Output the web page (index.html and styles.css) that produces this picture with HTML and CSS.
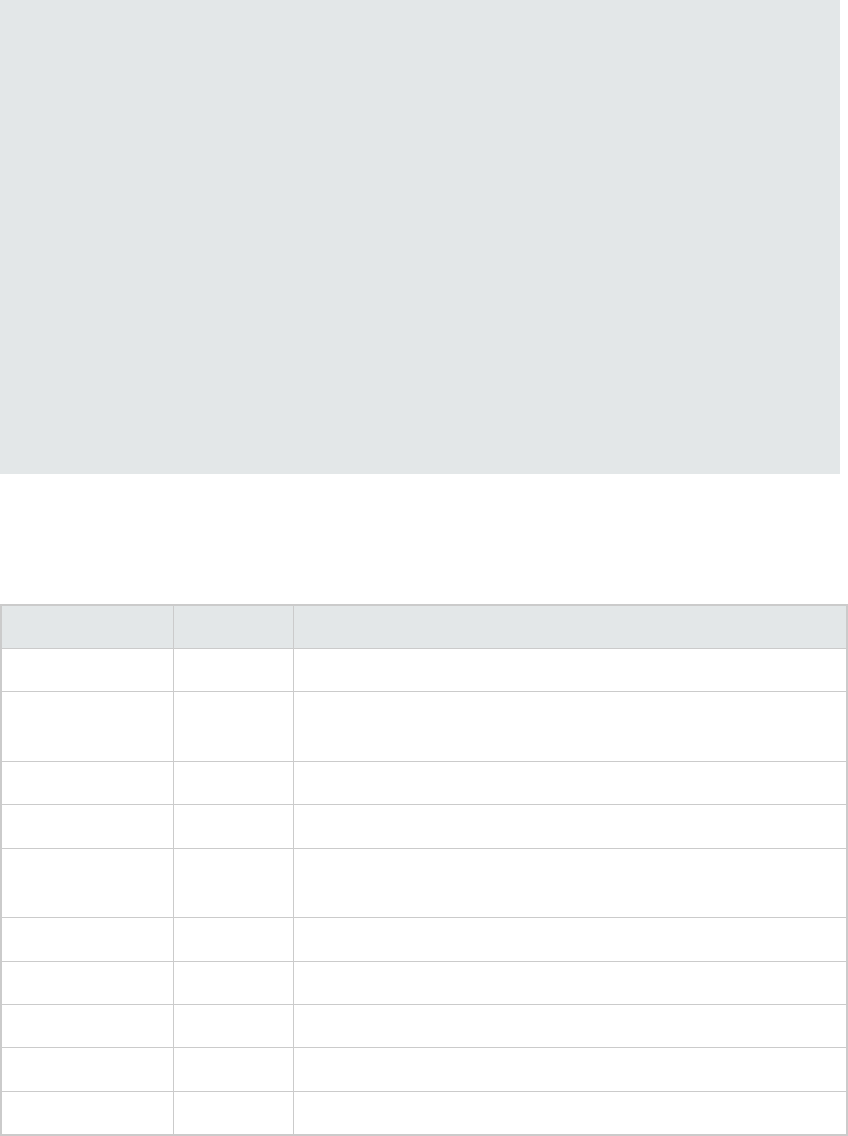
FILE: index.html
```html
<!DOCTYPE html>
<html lang="en">
  <head>
    <meta charset="UTF-8" />
    <meta name="viewport" content="width=device-width, initial-scale=1.0" />
    <title>Table</title>
    <link rel="stylesheet" href="styles.css">
  </head>
  <body>
    <div class="figure"></div>

    <table class="data-table">
      <thead>
        <tr>
          <th class="col-name"></th>
          <th class="col-type"></th>
          <th class="col-desc"></th>
        </tr>
      </thead>
      <tbody>
        <tr><td></td><td></td><td></td></tr>
        <tr class="tall"><td></td><td></td><td></td></tr>
        <tr><td></td><td></td><td></td></tr>
        <tr><td></td><td></td><td></td></tr>
        <tr class="tall"><td></td><td></td><td></td></tr>
        <tr><td></td><td></td><td></td></tr>
        <tr><td></td><td></td><td></td></tr>
        <tr><td></td><td></td><td></td></tr>
        <tr><td></td><td></td><td></td></tr>
        <tr><td></td><td></td><td></td></tr>
      </tbody>
    </table>
  </body>
</html>
```

FILE: styles.css
```css
:root {
  --panel-color: #e3e7e8;
  --line-color: #cbcbcb;
}

* {
  padding: 0;
  margin: 0;
  box-sizing: border-box;
}

body {
  font-family: "Liberation Sans", Arial, sans-serif;
  font-size: 14px;
  color: #333333;
  background: #ffffff;
}

/* image placeholder */
.figure {
  width: 840px;
  height: 474px;
  background: var(--panel-color);
  margin-bottom: 130px;
}

.data-table {
  width: 100%;
  table-layout: fixed;
  border-collapse: separate;
  border-spacing: 0;
  border: 2px solid var(--line-color);
}

.data-table th,
.data-table td {
  border-right: 1px solid var(--line-color);
  border-bottom: 1px solid var(--line-color);
  height: 43.4px;
  padding: 0 10px;
  text-align: left;
  vertical-align: top;
}

.data-table th:last-child,
.data-table td:last-child {
  border-right: none;
}

.data-table tbody tr:last-child td {
  border-bottom: none;
  height: 42px;
}

.data-table th {
  background: var(--panel-color);
  height: 43px;
}

.data-table .col-name {
  width: 172px;
}

.data-table .col-type {
  width: 120px;
}

.data-table tr.tall td {
  height: 69.5px;
}
```
